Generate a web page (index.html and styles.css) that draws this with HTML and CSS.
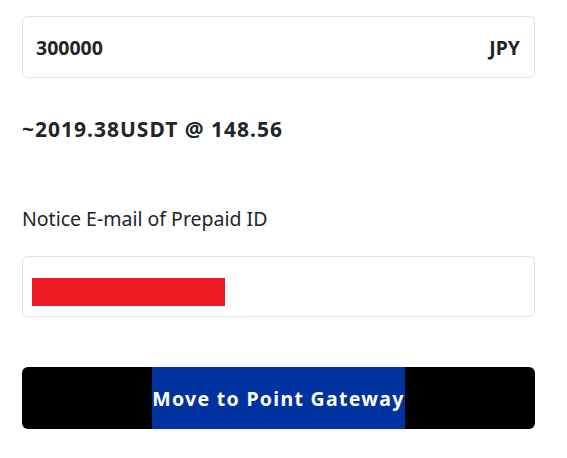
FILE: index.html
```html
<!DOCTYPE html>
<html lang="en">
<head>
<meta charset="utf-8">
<link rel="stylesheet" href="styles.css">
</head>
<body>
<div class="page">
  <div class="field amount">
    <span class="amount-value">300000</span>
    <span class="currency">JPY</span>
  </div>
  <div class="rate">~2019.38USDT @ 148.56</div>
  <div class="label">Notice E-mail of Prepaid ID</div>
  <div class="field email">
    <span class="redact"></span>
  </div>
  <button class="gateway"><span class="gateway-text">Move to Point Gateway</span></button>
</div>
</body>
</html>
```
FILE: styles.css
```css
html, body {
  margin: 0;
  padding: 0;
  background: #ffffff;
}
body {
  font-family: "Noto Sans", "Open Sans", sans-serif;
  color: #212529;
}
.page {
  width: 513px;
  padding: 16px 0 0 22px;
  display: flex;
  flex-direction: column;
}
.field {
  box-sizing: border-box;
  border: 1px solid #dee2e6;
  border-radius: 6px;
  background: #fff;
}
.amount {
  height: 62px;
  display: flex;
  align-items: center;
  justify-content: space-between;
  padding: 0 14px 0 13px;
  font-weight: 700;
  font-size: 19.5px;
}
.rate {
  margin-top: 36px;
  font-size: 21px;
  font-weight: 700;
  line-height: 30px;
  letter-spacing: 1px;
}
.label {
  margin-top: 61px;
  font-size: 19.5px;
  line-height: 27px;
}
.email {
  margin-top: 24px;
  height: 61px;
  padding: 21px 9px 0 9px;
}
.redact {
  display: block;
  width: 193px;
  height: 28px;
  background: #ed1c24;
}
.gateway {
  margin-top: 50px;
  height: 62px;
  border: 0;
  border-radius: 6px;
  background: #000;
  padding: 0;
  display: flex;
  justify-content: center;
  align-items: stretch;
  font-family: inherit;
}
.gateway-text {
  display: flex;
  align-items: center;
  background: #00339f;
  color: #fff;
  font-weight: 700;
  font-size: 19.5px;
  letter-spacing: 1.3px;
  padding: 0;
}
```
